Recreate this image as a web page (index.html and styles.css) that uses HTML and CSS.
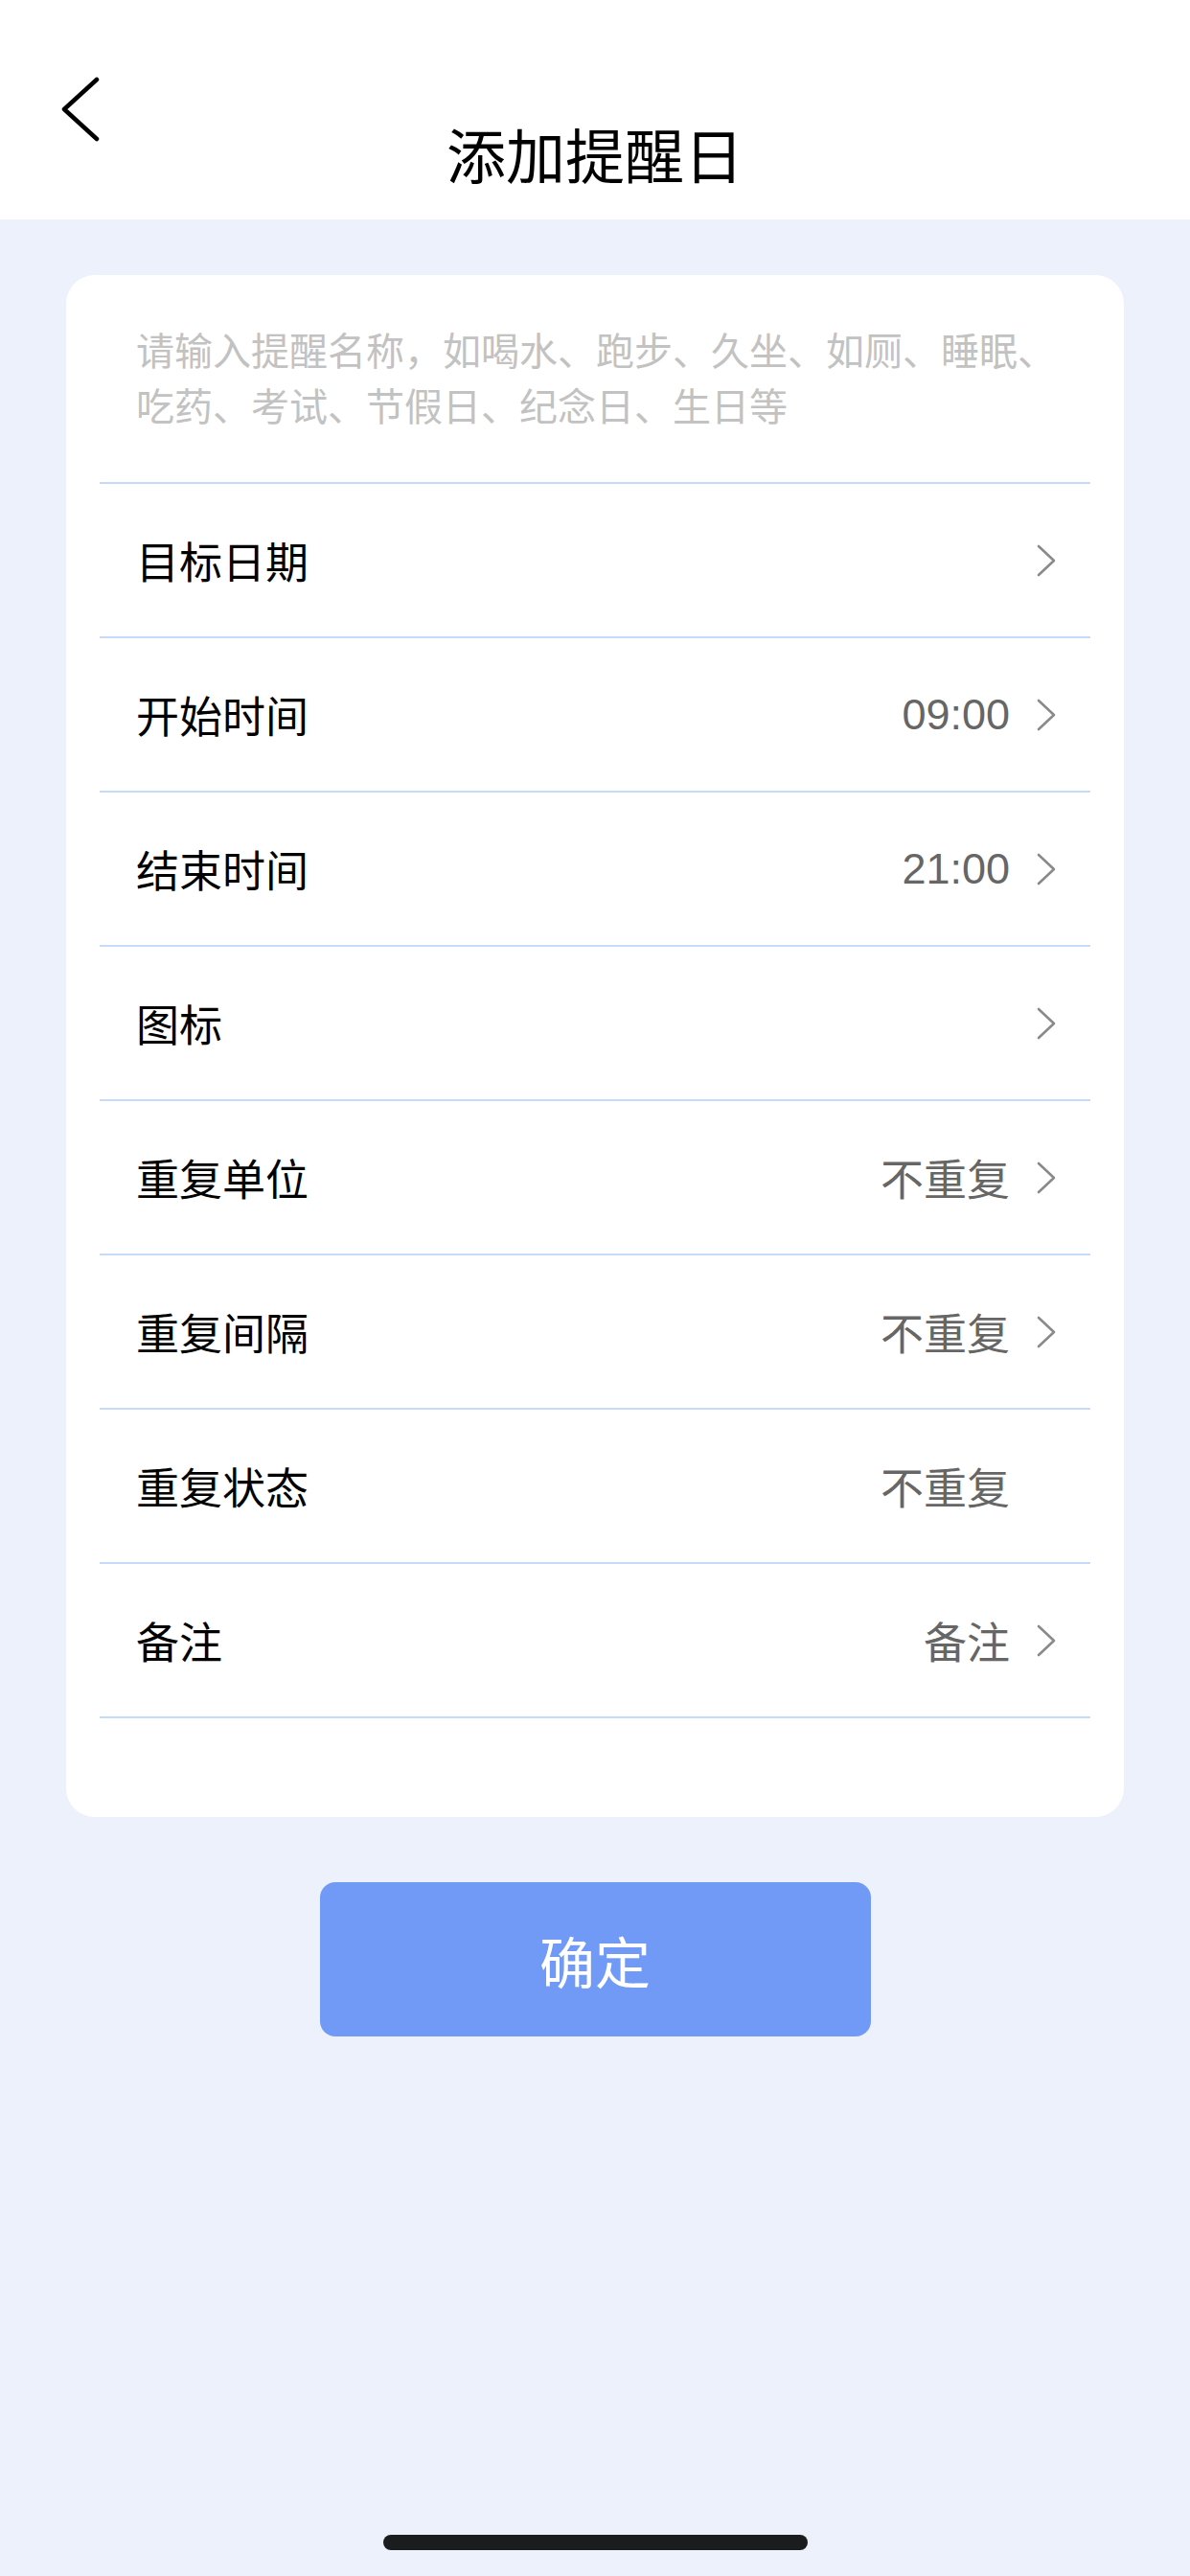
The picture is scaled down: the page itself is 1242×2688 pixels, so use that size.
FILE: index.html
```html
<!DOCTYPE html>
<html lang="zh-CN">

<head>
    <meta charset="UTF-8">
    <meta name="viewport" content="width=device-width, initial-scale=1.0">
    <title>添加提醒日</title>
    <link rel="stylesheet" href="styles.css">
</head>

<body>
    <div class="page">
        <!-- Header -->
        <header class="header">
            <a class="back" href="#">
                <svg width="40" height="68" viewBox="0 0 40 68">
                    <polyline points="37,3 3,34 37,65" fill="none" stroke="#000" stroke-width="4.5" stroke-linecap="round" stroke-linejoin="round" />
                </svg>
            </a>
            <h1>添加提醒日</h1>
            <span></span>
        </header>

        <!-- Form card -->
        <main class="content">
            <div class="card">
                <div class="name-input">请输入提醒名称，如喝水、跑步、久坐、如厕、睡眠、吃药、考试、节假日、纪念日、生日等</div>

                <div class="row">
                    <span class="label">目标日期</span>
                    <span class="value"></span>
                    <svg class="arrow" width="20" height="34" viewBox="0 0 20 34"><polyline points="2,2 18,17 2,32" /></svg>
                </div>
                <div class="row">
                    <span class="label">开始时间</span>
                    <span class="value">09:00</span>
                    <svg class="arrow" width="20" height="34" viewBox="0 0 20 34"><polyline points="2,2 18,17 2,32" /></svg>
                </div>
                <div class="row">
                    <span class="label">结束时间</span>
                    <span class="value">21:00</span>
                    <svg class="arrow" width="20" height="34" viewBox="0 0 20 34"><polyline points="2,2 18,17 2,32" /></svg>
                </div>
                <div class="row">
                    <span class="label">图标</span>
                    <span class="value"></span>
                    <svg class="arrow" width="20" height="34" viewBox="0 0 20 34"><polyline points="2,2 18,17 2,32" /></svg>
                </div>
                <div class="row">
                    <span class="label">重复单位</span>
                    <span class="value">不重复</span>
                    <svg class="arrow" width="20" height="34" viewBox="0 0 20 34"><polyline points="2,2 18,17 2,32" /></svg>
                </div>
                <div class="row">
                    <span class="label">重复间隔</span>
                    <span class="value">不重复</span>
                    <svg class="arrow" width="20" height="34" viewBox="0 0 20 34"><polyline points="2,2 18,17 2,32" /></svg>
                </div>
                <div class="row">
                    <span class="label">重复状态</span>
                    <span class="value">不重复</span>
                    <svg class="arrow hidden" width="20" height="34" viewBox="0 0 20 34"><polyline points="2,2 18,17 2,32" /></svg>
                </div>
                <div class="row">
                    <span class="label">备注</span>
                    <span class="value">备注</span>
                    <svg class="arrow" width="20" height="34" viewBox="0 0 20 34"><polyline points="2,2 18,17 2,32" /></svg>
                </div>
            </div>

            <button class="confirm">确定</button>
        </main>

        <div class="home-indicator"></div>
    </div>
</body>

</html>
```

FILE: styles.css
```css
/* Reset and Global Styles */
* {
    margin: 0;
    padding: 0;
    box-sizing: border-box;
}

body {
    font-family: "Liberation Sans", "Noto Sans CJK SC", sans-serif;
    background-color: #ecf1fc;
}

.page {
    min-height: 2688px;
    display: flex;
    flex-direction: column;
}

/* Header */
.header {
    background-color: #fff;
    height: 229px;
    padding-top: 80px;
    display: grid;
    grid-template-columns: 1fr auto 1fr;
    align-items: start;
}

.header .back {
    display: block;
    margin-left: 64px;
    width: 40px;
    height: 68px;
}

.header h1 {
    margin-top: 44px;
    font-family: "Noto Sans CJK SC", sans-serif;
    font-size: 62px;
    font-weight: 400;
    line-height: 72px;
    color: #000;
}

/* Content */
.content {
    padding: 58px 69px 0;
    display: flex;
    flex-direction: column;
    align-items: center;
}

.card {
    width: 100%;
    background-color: #fff;
    border-radius: 30px;
    padding: 0 35px 103px;
}

.name-input {
    padding: 48px 20px 52px 38px;
    border-bottom: 2px solid #c6dbfa;
    font-family: "Noto Sans CJK SC", sans-serif;
    font-size: 40px;
    line-height: 58px;
    color: #c2c2c2;
}

.row {
    height: 161px;
    display: flex;
    align-items: center;
    padding: 0 36px 0 38px;
    border-bottom: 2px solid #c6dbfa;
}

.row .label {
    flex: 1;
    font-size: 45px;
    color: #000;
}

.row .value {
    font-size: 45px;
    color: #666;
}

.row .arrow {
    margin-left: 28px;
    fill: none;
    stroke: #8a8a8a;
    stroke-width: 2.6;
    stroke-linecap: round;
    stroke-linejoin: round;
}

.row .arrow.hidden {
    visibility: hidden;
}

/* Confirm button */
.confirm {
    margin-top: 68px;
    width: 575px;
    height: 161px;
    border: none;
    border-radius: 16px;
    background-color: #7199f6;
    color: #fff;
    font-family: "Noto Sans CJK SC", sans-serif;
    font-size: 58px;
    cursor: pointer;
}

/* Home indicator */
.home-indicator {
    margin: auto auto 27px;
    width: 443px;
    height: 16px;
    border-radius: 8px;
    background-color: #1b1c1e;
}
```
